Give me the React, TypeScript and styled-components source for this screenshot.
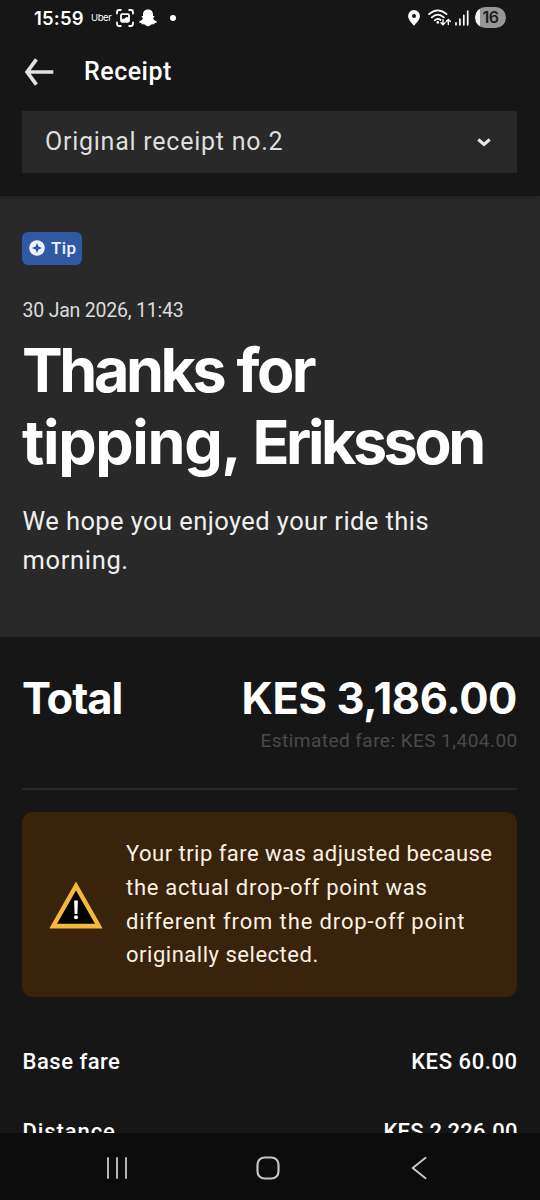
import React from "react";
import styled, { createGlobalStyle } from "styled-components";

const GlobalStyle = createGlobalStyle`
  * { box-sizing: border-box; }
  html, body { margin: 0; background: #161616; }
  body { overflow: hidden; }
`;

const body = `"Roboto", "Liberation Sans", sans-serif`;
const display = `"Inter", "Liberation Sans", sans-serif`;

const Screen = styled.div`
  width: 540px;
  height: 1200px;
  display: flex;
  flex-direction: column;
  overflow: hidden;
  background: #161616;
  color: #fff;
  font-family: ${body};
`;

const Header = styled.header`
  flex: none;
  height: 196px;
  background: #161616;
  box-shadow: 0 1px 5px rgba(0, 0, 0, 0.25);
  z-index: 1;
`;

const StatusBar = styled.div`
  height: 35px;
  padding: 0 34px 0 34px;
  display: flex;
  align-items: center;
  justify-content: space-between;
`;

const StatusGroup = styled.div`
  display: flex;
  align-items: center;
`;

const Clock = styled.span`
  width: 57px;
  font: 600 18.5px/24px ${display};
  letter-spacing: 0.2px;
`;

const Carrier = styled.span`
  width: 25px;
  font: 400 9.5px/12px ${display};
  letter-spacing: -0.4px;
`;

const Spacer = styled.span<{ $w: number }>`
  width: ${(p) => p.$w}px;
`;

const Dot = styled.span`
  width: 6px;
  height: 6px;
  border-radius: 50%;
  background: #fff;
`;

const Battery = styled.span`
  width: 31px;
  height: 21px;
  border-radius: 11px;
  display: flex;
  align-items: center;
  justify-content: center;
  background: linear-gradient(90deg, #f2f2f2 5px, #979797 5px);
  color: #1b1b1b;
  font: 600 16px/21px ${display};
  letter-spacing: -0.5px;
`;

const TitleBar = styled.div`
  height: 76px;
  padding: 0 0 3px 23px;
  display: flex;
  align-items: center;
`;

const Title = styled.h1`
  margin: 0 0 0 30px;
  font: 500 25px/36px ${body};
  letter-spacing: 0.5px;
`;

const Select = styled.div`
  height: 62px;
  margin: 0 23px 0 22px;
  padding: 0 26px 0 23px;
  display: flex;
  align-items: center;
  justify-content: space-between;
  background: #292929;
  color: #dedede;
  font: 400 25px/36px ${body};
  letter-spacing: 0.75px;
`;

const Hero = styled.section`
  flex: none;
  height: 441px;
  padding: 36px 23px 0 22px;
  background: #292929;
`;

const Chip = styled.div`
  width: 60px;
  height: 33px;
  padding: 0 0 1px 7px;
  display: flex;
  align-items: center;
  gap: 6px;
  border-radius: 6px;
  background: #3059a3;
  color: #eef3ff;
  font: 500 17px/24px ${body};
  letter-spacing: 0.4px;
`;

const DateText = styled.div`
  margin: 32px 0 0 0.6px;
  color: #dcdcdc;
  font: 400 19.5px/28px ${body};
  letter-spacing: -0.22px;
`;

const Headline = styled.h2`
  margin: 8.5px 0 0;
  font: 700 61px/72.5px ${display};
`;

const HeadlineLine = styled.span`
  display: block;
  white-space: nowrap;
  letter-spacing: -1.2px;
`;

const Tracked = styled.span<{ $spacing: number }>`
  letter-spacing: ${(p) => p.$spacing}px;
`;

const Greeting = styled.p`
  margin: 23px 0 0 0.6px;
  color: #efefef;
  font: 400 25.5px/39px ${body};
  letter-spacing: 0.42px;
`;

const Content = styled.main`
  flex: 1;
  min-height: 0;
  overflow: hidden;
  padding: 33px 23px 0 22px;
`;

const TotalRow = styled.div`
  display: flex;
  justify-content: space-between;
  font: 700 43.5px/56px ${display};
`;

const Estimate = styled.div`
  margin-right: -0.7px;
  padding-top: 1px;
  text-align: right;
  color: #4a4a4a;
  font: 400 19px/28px ${body};
  letter-spacing: 0.46px;
`;

const Divider = styled.hr`
  margin: 33px 0 22.5px;
  height: 1.5px;
  border: 0;
  background: #292929;
`;

const Notice = styled.div`
  height: 185px;
  padding: 0 20px 0 26.5px;
  display: flex;
  align-items: center;
  gap: 23.5px;
  border-radius: 11px;
  background: #39230b;
`;

const NoticeText = styled.p`
  margin: 0;
  color: #fbf1e4;
  font: 400 22px/33.75px ${body};
  white-space: nowrap;
`;

const FareList = styled.div`
  margin: 50px -0.7px 0 0.6px;
  display: flex;
  flex-direction: column;
  gap: 39.5px;
`;

const FareRow = styled.div`
  display: flex;
  justify-content: space-between;
  font: 500 22px/30px ${body};
`;

const NavBar = styled.nav`
  flex: none;
  height: 67.5px;
  padding: 3px 46px 0 41px;
  display: grid;
  grid-template-columns: repeat(3, 1fr);
  align-items: center;
  justify-items: center;
  background: #0c0c0c;
`;

const CaptureIcon = () => (
  <svg width="18" height="18" viewBox="0 0 18 18" fill="none" stroke="#fff" strokeWidth="1.8" strokeLinecap="round">
    <path d="M1 4.6V3.2Q1 1 3.2 1H4.8M13.2 1h1.6Q17 1 17 3.2v1.4M17 13.4v1.4Q17 17 14.8 17h-1.6M4.8 17H3.2Q1 17 1 14.8v-1.4" />
    <rect x="5" y="5.2" width="8" height="7.6" rx="1.2" />
    <path d="M5 11l2-1.4 1.3.4 2-2 2.700.8v4H5z" fill="#fff" stroke="none" />
  </svg>
);

const GhostIcon = () => (
  <svg width="18" height="18" viewBox="0 0 18 18" fill="#fff">
    <path d="M9 .5c3 0 5 2 5 4.9v1.5c.7.1 1.4 0 1.4.6 0 .8-1.2 1-1.2 1.7 0 1.1 1.5 2.6 3.4 3.1.5.2.3.9-.2 1.2-.6.4-1.5.4-1.8.7-.3.3-.1.9-.6 1-.7.2-1.6-.1-2.6.3-.9.4-1.8 1.7-3.4 1.7s-2.5-1.3-3.4-1.7c-1-.4-1.9-.1-2.6-.3-.5-.1-.3-.7-.6-1-.3-.3-1.2-.3-1.8-.7-.5-.3-.7-1-.2-1.2 1.9-.5 3.4-2 3.4-3.1 0-.7-1.2-.9-1.2-1.7 0-.6.7-.5 1.4-.6V5.4C4 2.500 6 .5 9 .5z" />
  </svg>
);

const PinIcon = () => (
  <svg width="12" height="16" viewBox="0 0 12 16">
    <path fill="#fff" fillRule="evenodd" d="M6 .1a5.9 5.9 0 0 1 5.9 5.9C11.9 9.8 8.3 13 6 15.8 3.700 13 .1 9.8.1 6A5.9 5.9 0 0 1 6 .1zm0 3.9a2 2 0 1 0 0 4 2 2 0 0 0 0-4z" />
  </svg>
);

const WifiIcon = () => (
  <svg width="23" height="17" viewBox="0 0 23 17" fill="none" stroke="#fff" strokeWidth="1.7" strokeLinecap="round">
    <path d="M1 5.2Q9.8-2.6 18.6 5.2M3.8 8.4Q9.8 2.8 15.8 8.4M6.7 11.4Q9.8 8.6 12.6 11" />
    <circle cx="9.8" cy="13.4" r="1.3" fill="#fff" stroke="none" />
    <path strokeWidth="1.4" d="M15 10.6v5M13 13.8l2 2 2-2M20.3 15.6v-5M18.3 12.4l2-2 2 2" />
  </svg>
);

const SignalIcon = () => (
  <svg width="14" height="16" viewBox="0 0 14 16" stroke="#fff" strokeWidth="1.7" strokeLinecap="round">
    <path d="M1 14.8v-2M4.9 14.8V9.2M8.8 14.8V5.4M12.7 14.8V1.2" />
  </svg>
);

const BackArrow = () => (
  <svg width="31" height="28" viewBox="0 0 31 28" fill="none" stroke="#e2e2e2" strokeWidth="3.7">
    <path d="M3.5 14H30.3M13.4 1.3L4.1 14l9.3 12.7" />
  </svg>
);

const ChevronDown = () => (
  <svg width="14" height="9" viewBox="0 0 14 9" fill="none" stroke="#e8e8e8" strokeWidth="3">
    <path d="M1.3 1.5L7 6.5l5.7-5" />
  </svg>
);

const TipIcon = () => (
  <svg width="16" height="16" viewBox="0 0 16 16">
    <circle cx="8" cy="8" r="7.8" fill="#eef3ff" />
    <path fill="#3059a3" d="M8 2.9L9.5 6.5 13.1 8 9.5 9.5 8 13.1 6.5 9.5 2.9 8l3.6-1.5z" />
  </svg>
);

const WarningIcon = () => (
  <svg width="54" height="48" viewBox="0 0 54 48">
    <path d="M27 .5L53.7 47.5H.3z" fill="#f3b93b" />
    <path d="M27 9.5L46 42.8H8z" fill="#000" />
    <path d="M25.1 19.5h3.8l-.5 13.5h-2.8z" fill="#fff" />
    <circle cx="27" cy="36.3" r="2" fill="#fff" />
  </svg>
);

const RecentsIcon = () => (
  <svg width="22" height="24" viewBox="0 0 22 24" stroke="#b9b4b4" strokeWidth="2" strokeLinecap="round">
    <path d="M2 2v20M11 2v20M20 2v20" />
  </svg>
);

const HomeIcon = () => (
  <svg width="24" height="24" viewBox="0 0 24 24" fill="none" stroke="#c8c4c4" strokeWidth="2.2">
    <rect x="1.5" y="1.5" width="21" height="21" rx="7" />
  </svg>
);

const BackIcon = () => (
  <svg width="16" height="24" viewBox="0 0 16 24" fill="none" stroke="#c8c4c4" strokeWidth="2" strokeLinecap="round">
    <path d="M14.5 1.8L1.8 12l12.7 10.2" />
  </svg>
);

const notice = [
  { text: "Your trip fare was adjusted because", spacing: 0.48 },
  { text: "the actual drop-off point was", spacing: 0.71 },
  { text: "different from the drop-off point", spacing: 0.88 },
  { text: "originally selected.", spacing: 0.52 },
];

const fares = [
  { label: "Base fare", amount: "KES 60.00", labelSpacing: 0.5, amountSpacing: 0.59 },
  { label: "Distance", amount: "KES 2,226.00", labelSpacing: 0.9, amountSpacing: 0.26 },
];

export default function App() {
  return (
    <Screen>
      <GlobalStyle />
      <Header>
        <StatusBar>
          <StatusGroup>
            <Clock>15:59</Clock>
            <Carrier>Uber</Carrier>
            <CaptureIcon />
            <Spacer $w={5} />
            <GhostIcon />
            <Spacer $w={13} />
            <Dot />
          </StatusGroup>
          <StatusGroup>
            <PinIcon />
            <Spacer $w={8} />
            <WifiIcon />
            <Spacer $w={4} />
            <SignalIcon />
            <Spacer $w={6} />
            <Battery>16</Battery>
          </StatusGroup>
        </StatusBar>
        <TitleBar>
          <BackArrow />
          <Title>Receipt</Title>
        </TitleBar>
        <Select>
          Original receipt no.2
          <ChevronDown />
        </Select>
      </Header>
      <Hero>
        <Chip>
          <TipIcon />
          Tip
        </Chip>
        <DateText>30 Jan 2026, 11:43</DateText>
        <Headline>
          <HeadlineLine>
            <Tracked $spacing={-3.4}>Thanks</Tracked> <Tracked $spacing={-2.5}>for</Tracked>
          </HeadlineLine>
          <HeadlineLine>
            <Tracked $spacing={-1.35}>tipping,</Tracked>
            <Tracked $spacing={-2.4}> </Tracked>
            <Tracked $spacing={-3.45}>Eriksson</Tracked>
          </HeadlineLine>
        </Headline>
        <Greeting>
          We hope you enjoyed your ride this
          <br />
          <Tracked $spacing={0.65}>morning.</Tracked>
        </Greeting>
      </Hero>
      <Content>
        <TotalRow>
          <Tracked $spacing={-1.05}>Total</Tracked>
          <Tracked $spacing={-0.4}>KES 3,186.00</Tracked>
        </TotalRow>
        <Estimate>Estimated fare: KES 1,404.00</Estimate>
        <Divider />
        <Notice>
          <WarningIcon />
          <NoticeText>
            {notice.map((line, i) => (
              <React.Fragment key={line.text}>
                {i > 0 && <br />}
                <Tracked $spacing={line.spacing}>{line.text}</Tracked>
              </React.Fragment>
            ))}
          </NoticeText>
        </Notice>
        <FareList>
          {fares.map((fare) => (
            <FareRow key={fare.label}>
              <Tracked $spacing={fare.labelSpacing}>{fare.label}</Tracked>
              <Tracked $spacing={fare.amountSpacing}>{fare.amount}</Tracked>
            </FareRow>
          ))}
        </FareList>
      </Content>
      <NavBar>
        <RecentsIcon />
        <HomeIcon />
        <BackIcon />
      </NavBar>
    </Screen>
  );
}
